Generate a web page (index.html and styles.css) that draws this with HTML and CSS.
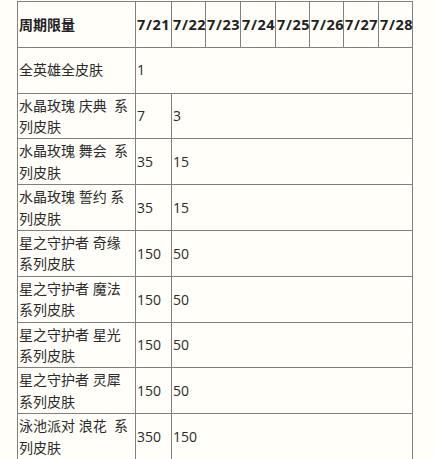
FILE: index.html
```html
<!DOCTYPE html>
<html lang="zh-CN">
<head>
<meta charset="utf-8">
<title>周期限量</title>
<link rel="stylesheet" href="styles.css">
</head>
<body>
<table class="limits">
  <colgroup>
    <col class="c-name">
    <col class="c-d1">
    <col class="c-d2">
    <col class="c-d3">
    <col class="c-d4">
    <col class="c-d5">
    <col class="c-d6">
    <col class="c-d7">
    <col class="c-d8">
  </colgroup>
  <tr class="head">
    <th>周期限量</th>
    <th class="date">7/21</th>
    <th class="date">7/22</th>
    <th class="date">7/23</th>
    <th class="date">7/24</th>
    <th class="date">7/25</th>
    <th class="date">7/26</th>
    <th class="date">7/27</th>
    <th class="date">7/28</th>
  </tr>
  <tr>
    <td>全英雄全皮肤</td>
    <td colspan="8">1</td>
  </tr>
  <tr>
    <td>水晶玫瑰 庆典&nbsp; 系列皮肤</td>
    <td>7</td>
    <td colspan="7">3</td>
  </tr>
  <tr>
    <td>水晶玫瑰 舞会&nbsp; 系列皮肤</td>
    <td>35</td>
    <td colspan="7">15</td>
  </tr>
  <tr>
    <td>水晶玫瑰 誓约 系列皮肤</td>
    <td>35</td>
    <td colspan="7">15</td>
  </tr>
  <tr>
    <td>星之守护者 奇缘 系列皮肤</td>
    <td>150</td>
    <td colspan="7">50</td>
  </tr>
  <tr>
    <td>星之守护者 魔法 系列皮肤</td>
    <td>150</td>
    <td colspan="7">50</td>
  </tr>
  <tr>
    <td>星之守护者 星光 系列皮肤</td>
    <td>150</td>
    <td colspan="7">50</td>
  </tr>
  <tr>
    <td>星之守护者 灵犀 系列皮肤</td>
    <td>150</td>
    <td colspan="7">50</td>
  </tr>
  <tr>
    <td>泳池派对 浪花&nbsp; 系列皮肤</td>
    <td>350</td>
    <td colspan="7">150</td>
  </tr>
</table>
</body>
</html>
```

FILE: styles.css
```css
html, body {
  background: #fffef9;
}

body {
  margin: 0;
  padding: 1px 0 0 17px;
  font-family: "Open Sans", "Noto Sans CJK SC", sans-serif;
  font-size: 14px;
  color: #2b2b2b;
}

.limits {
  border-collapse: collapse;
  table-layout: fixed;
  width: 396px;
}

.c-name { width: 118px; }
.c-d1 { width: 36px; }
.c-d2 { width: 34px; }
.c-d3 { width: 35px; }
.c-d4 { width: 35px; }
.c-d5 { width: 34px; }
.c-d6 { width: 34px; }
.c-d7 { width: 35px; }
.c-d8 { width: 34px; }

.limits th,
.limits td {
  border: 1px solid #808080;
  padding: 1px 0 1px 1px;
  line-height: 21.4px;
  height: 42.8px;
  text-align: left;
  vertical-align: middle;
  white-space: normal;
  overflow: visible;
}

.limits th {
  font-weight: bold;
  white-space: nowrap;
  color: #222;
}

.limits th.date {
  font-size: 14.5px;
  letter-spacing: 0.6px;
}
```
